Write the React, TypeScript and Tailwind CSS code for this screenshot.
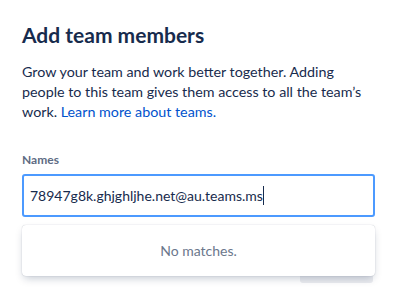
import React from "react";

const font = { fontFamily: 'Lato, "Noto Sans", "Liberation Sans", sans-serif' };

export default function App() {
  return (
    <div className="w-[397px] h-[306px] bg-white overflow-hidden" style={font}>
      <div className="px-[22px] pt-[23px]">
        <h2 className="text-[21px] leading-[24px] font-bold text-[#172B4D]">Add team members</h2>
        <p className="mt-[15px] pr-[6px] text-[14.3px] leading-[20px] text-[#172B4D]">
          Grow your team and work better together. Adding people to this team gives them access to all the team’s
          work. <span className="text-[#0052CC]">Learn more about teams.</span>
        </p>

        <div className="mt-[30px] text-[12px] leading-[16px] font-bold text-[#5E6C84]">Names</div>

        <div className="relative mt-[6px]">
          {/* input */}
          <div className="h-[43px] border-2 border-[#4C9AFF] rounded-[3px] flex items-center px-[6px] text-[14px] text-[#172B4D]">
            <span>78947g8k.ghjghljhe.net@au.teams.ms</span>
            <span className="w-px h-[19px] bg-[#172B4D]" />
          </div>

          {/* footer button, mostly covered by the menu */}
          <div className="flex justify-end mt-[34px] pr-[2px]">
            <div className="w-[73px] h-[32px] rounded-[3px] bg-[#ebecf0]" />
          </div>

          {/* dropdown */}
          <div className="absolute left-0 right-0 top-[51px] h-[51px] rounded-[4px] bg-white flex items-center justify-center text-[14px] text-[#6B778C] shadow-[0_4px_8px_-2px_rgba(9,30,66,0.25),0_0_1px_rgba(9,30,66,0.31)]">
            No matches.
          </div>
        </div>
      </div>
    </div>
  );
}
